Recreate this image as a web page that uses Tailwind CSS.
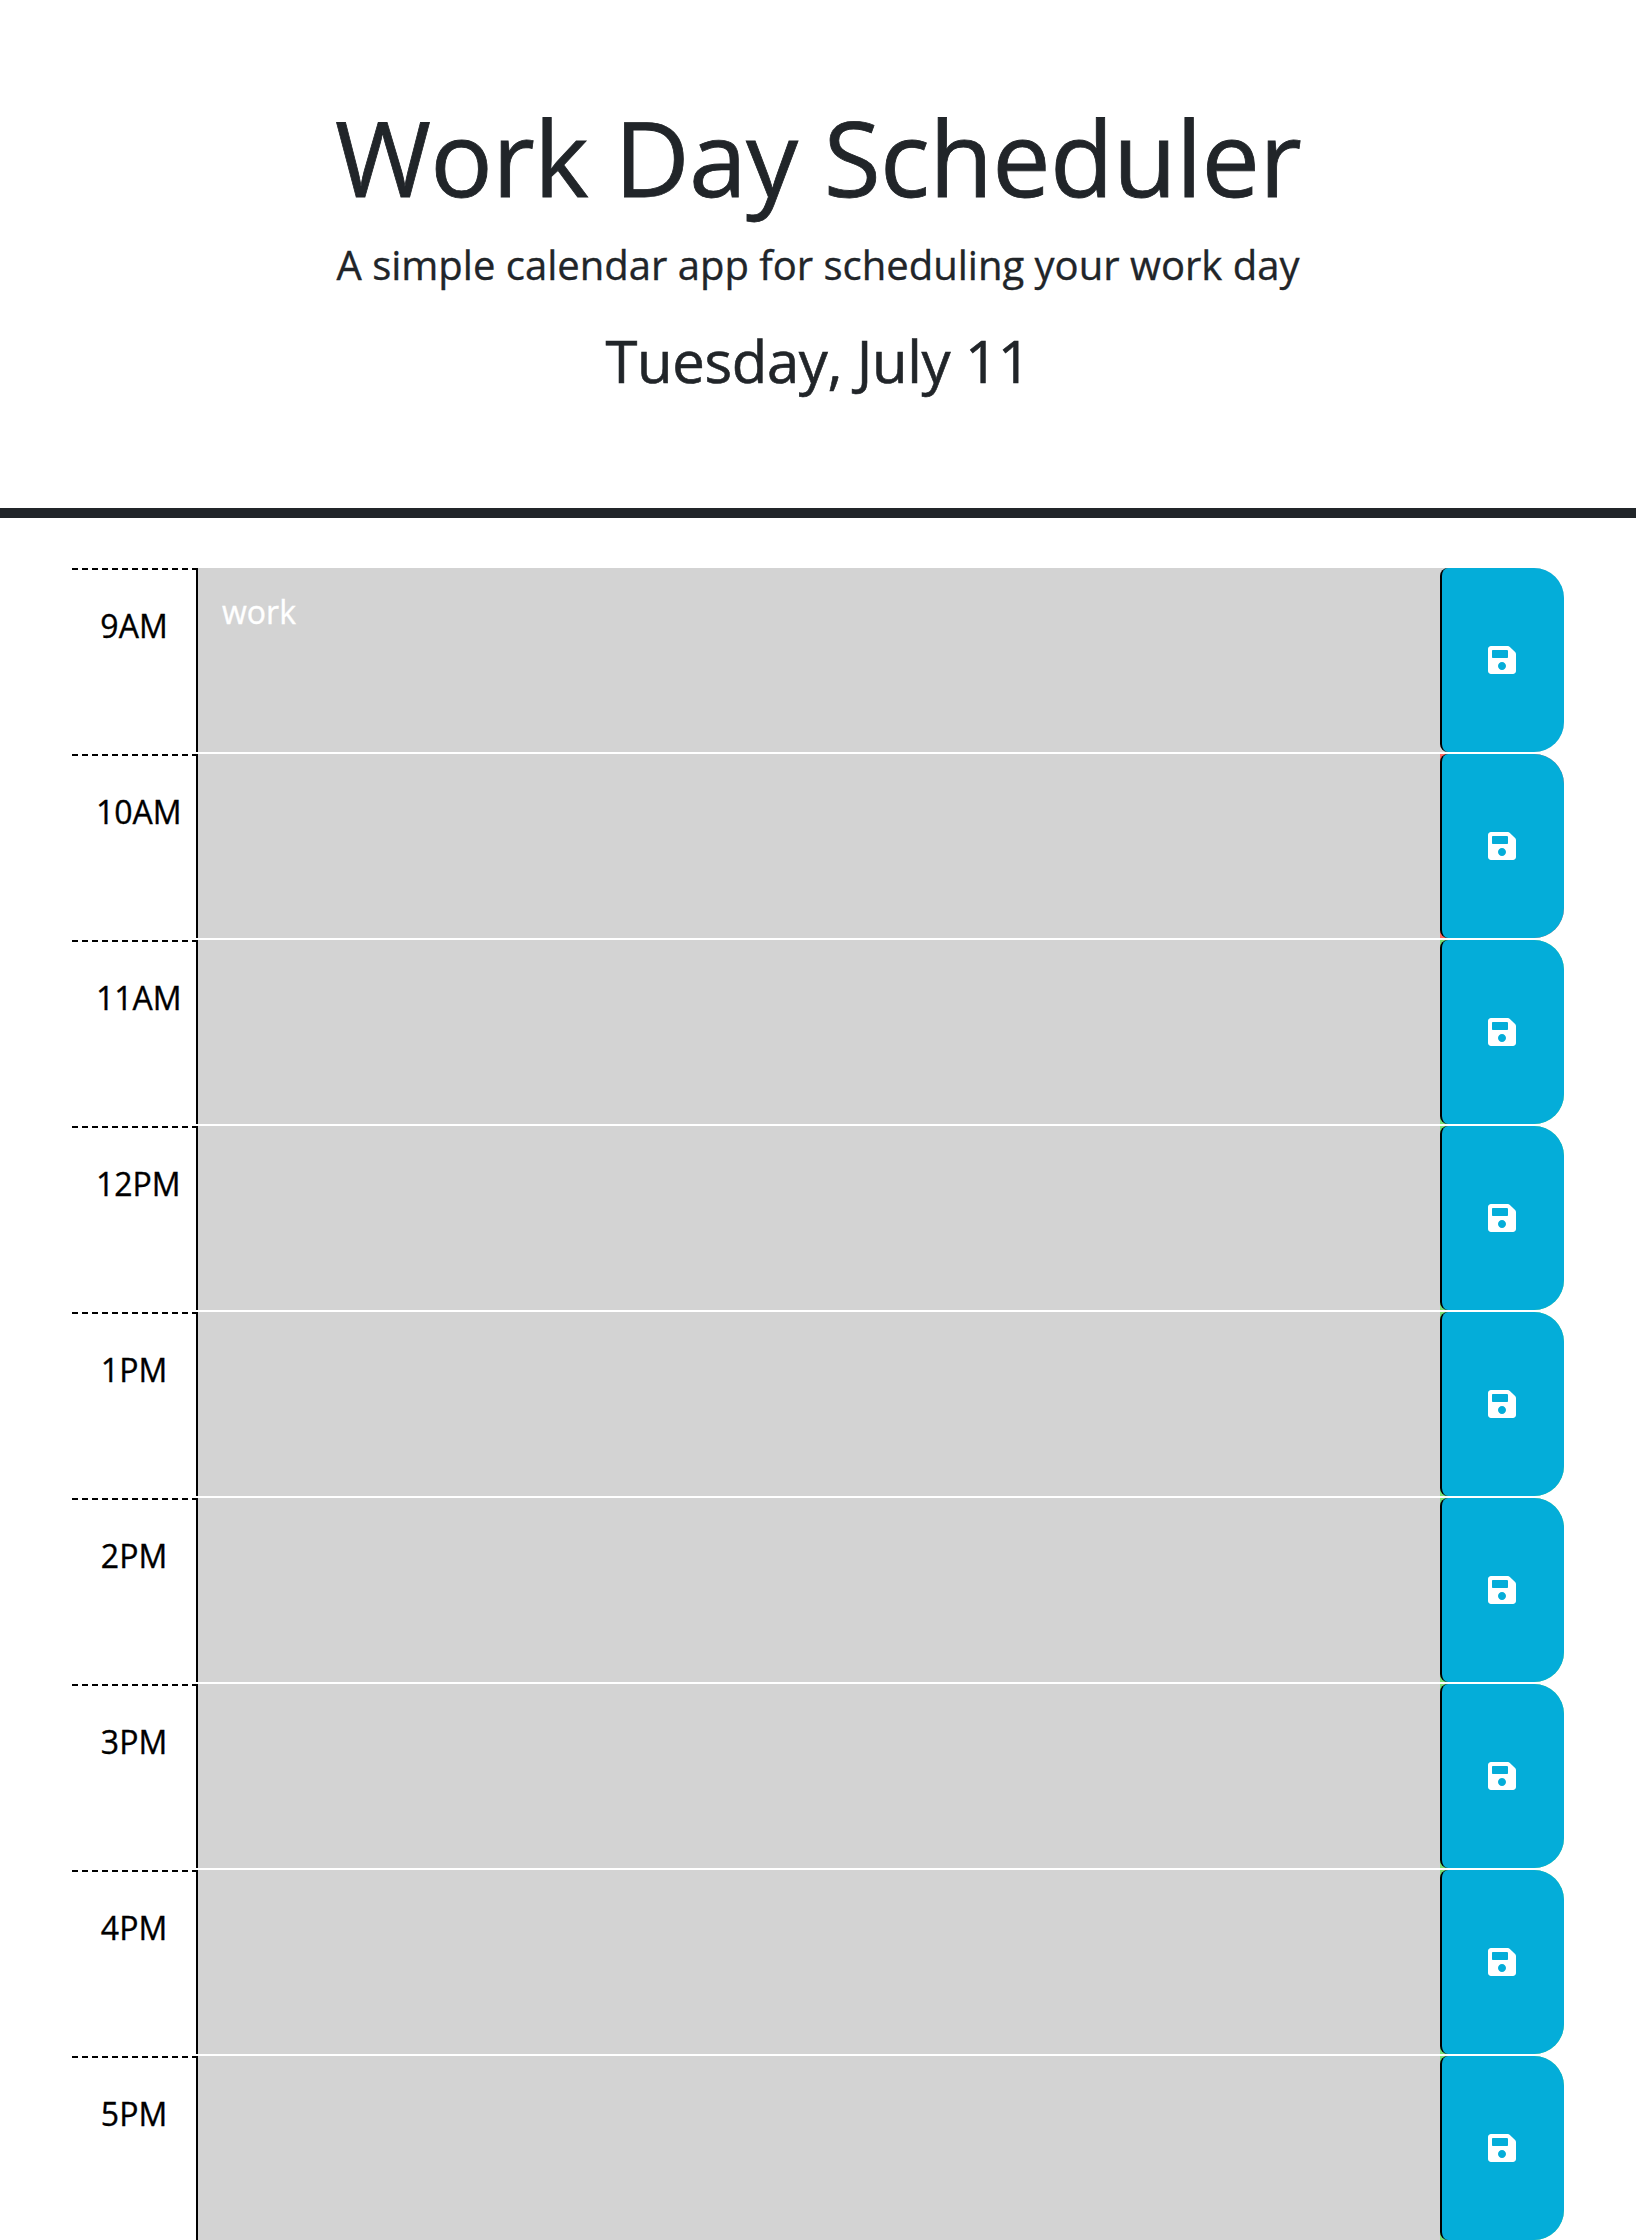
<!DOCTYPE html>
<html lang="en">
<head>
<meta charset="utf-8">
<title>Work Day Scheduler</title>
<script src="https://cdn.jsdelivr.net/npm/@tailwindcss/browser@4"></script>
</head>
<body class="bg-white font-['Open_Sans',sans-serif] text-[32px] leading-[48px] text-black [-webkit-text-stroke:0.35px]">
<header class="h-[518px] border-b-[10px] border-[#212529] pt-[95px] text-center text-[#212529]">
  <h1 class="text-[104px] leading-[124px] tracking-[-0.7px] [-webkit-text-stroke:0.8px]">Work Day Scheduler</h1>
  <p class="mt-4 text-[40px] leading-[60px]">A simple calendar app for scheduling your work day</p>
  <p class="mt-[31px] text-[58px] leading-[70px] tracking-[-0.36px] [-webkit-text-stroke:0.6px]">Tuesday, July 11</p>
</header>
<main id="hours" class="flex flex-col gap-[2px] px-[72px] pt-[50px]"></main>
<template id="row">
  <section class="flex h-[184px] rounded-r-[30px]">
    <div class="hour w-[126px] border-t-2 border-r-2 border-black bg-white px-6 pt-8 text-center [border-top-style:dashed]"></div>
    <textarea class="w-[1242px] resize-none bg-[#d3d3d3] px-6 pt-5 text-white outline-none"></textarea>
    <button aria-label="save" class="flex w-[124px] items-center justify-center rounded-l-[8px] rounded-r-[30px] border-l-2 border-black bg-[#04add9] pr-[3px] text-white">
      <svg class="h-8 w-7" viewBox="0 0 448 512" fill="currentColor"><path d="M433.941 129.941l-83.882-83.882A48 48 0 0 0 316.118 32H48C21.49 32 0 53.49 0 80v352c0 26.51 21.49 48 48 48h352c26.51 0 48-21.49 48-48V163.882a48 48 0 0 0-14.059-33.941zM224 416c-35.346 0-64-28.654-64-64 0-35.346 28.654-64 64-64s64 28.654 64 64c0 35.346-28.654 64-64 64zm96-304.52V212c0 6.627-5.373 12-12 12H76c-6.627 0-12-5.373-12-12V108c0-6.627 5.373-12 12-12h228.52c3.183 0 6.235 1.264 8.485 3.515l3.48 3.48A11.996 11.996 0 0 1 320 111.48z"/></svg>
    </button>
  </section>
</template>
<script>
  const rows = [
    ['9AM', 'bg-[#d3d3d3]', 'work'], ['10AM', 'bg-[#ff6961]', ''], ['11AM', 'bg-[#77dd77]', ''],
    ['12PM', 'bg-[#77dd77]', ''], ['1PM', 'bg-[#77dd77]', ''], ['2PM', 'bg-[#77dd77]', ''],
    ['3PM', 'bg-[#77dd77]', ''], ['4PM', 'bg-[#77dd77]', ''], ['5PM', 'bg-[#77dd77]', '']
  ];
  for (const [hour, color, text] of rows) {
    const row = document.getElementById('row').content.cloneNode(true);
    row.querySelector('section').classList.add(color);
    row.querySelector('.hour').textContent = hour;
    row.querySelector('textarea').textContent = text;
    document.getElementById('hours').append(row);
  }
</script>
</body>
</html>
